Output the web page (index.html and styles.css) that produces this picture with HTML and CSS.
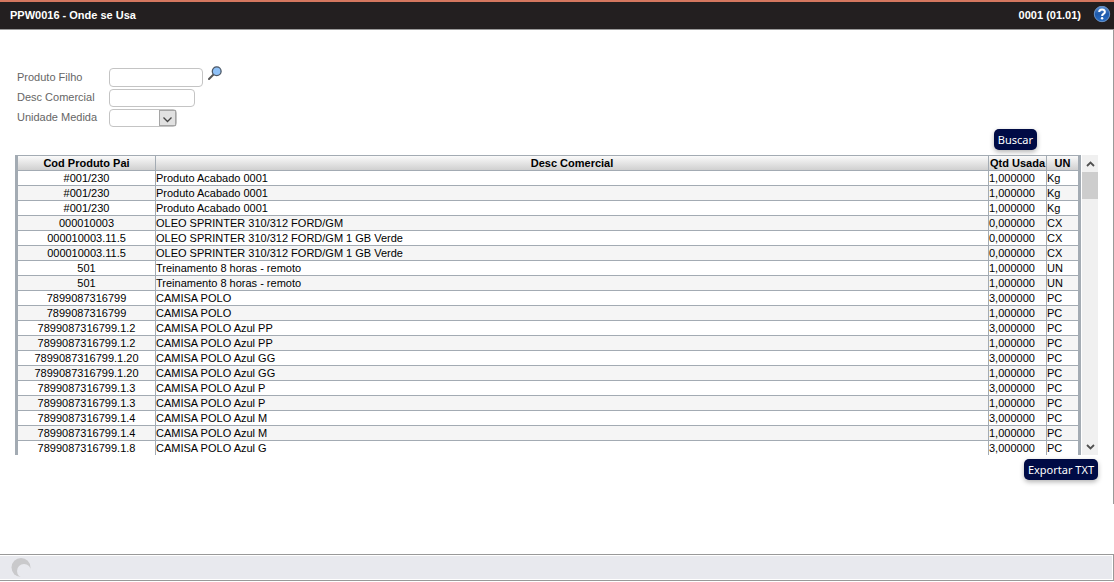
FILE: index.html
```html
<!DOCTYPE html>
<html lang="pt-BR">
<head>
  <meta charset="UTF-8">
  <meta name="viewport" content="width=device-width, initial-scale=1.0">
  <title>PPW0016 - Onde se Usa</title>
  <link rel="stylesheet" href="styles.css">
</head>
<body>
  <header class="topbar">
    <h1>PPW0016 - Onde se Usa</h1>
    <div class="topbar-right">
      <span>0001 (01.01)</span>
      <a href="#" class="help" aria-label="Ajuda">
        <svg width="18" height="18" viewBox="0 0 18 18">
          <defs>
            <linearGradient id="helpFill" x1="0" y1="0" x2="0" y2="1">
              <stop offset="0" stop-color="#5f92d2"/>
              <stop offset="0.5" stop-color="#1d58aa"/>
              <stop offset="1" stop-color="#2a6fc4"/>
            </linearGradient>
          </defs>
          <circle cx="9" cy="8" r="7.700" fill="url(#helpFill)" stroke="#6a93c8" stroke-width="1"/>
          <path d="M6.200 6.100C6.200 2.700 11.900 2.700 11.900 5.900C11.900 7.900 9.100 7.800 9.100 9.900" fill="none" stroke="#fff" stroke-width="2"/>
          <circle cx="9.100" cy="12.300" r="1.200" fill="#fff"/>
        </svg>
      </a>
    </div>
  </header>

  <main class="content">
    <form class="filters" id="filters">
      <div class="field">
        <label for="produto">Produto Filho</label>
        <input type="text" id="produto" class="input-produto">
        <button type="button" class="lookup" aria-label="Pesquisar produto">
          <svg width="14" height="14" viewBox="0 0 14 14">
            <path d="M1 13L6 8" stroke="#555" stroke-width="2" stroke-linecap="round"/>
            <circle cx="8.700" cy="5.200" r="4.400" fill="#8fc1f7" stroke="#4d5866" stroke-width="1.300"/>
          </svg>
        </button>
      </div>
      <div class="field">
        <label for="desc">Desc Comercial</label>
        <input type="text" id="desc" class="input-desc">
      </div>
      <div class="field">
        <label for="unidade">Unidade Medida</label>
        <div class="select-box">
          <select id="unidade"><option></option></select>
          <svg class="select-arrow" width="17" height="16" viewBox="0 0 17 16">
            <rect x="0.5" y="0.5" width="16" height="15" fill="#e1e1e1" stroke="#a5a5a5"/>
            <path d="M4.500 7.500L8.500 11.500L12.500 7.500" fill="none" stroke="#444" stroke-width="1.300"/>
          </svg>
        </div>
      </div>
    </form>

    <div class="search-actions">
      <button type="submit" form="filters" class="btn">Buscar</button>
    </div>

    <div class="grid-box">
      <div class="grid-scroll">
        <table class="grid">
          <colgroup>
            <col class="col-cod">
            <col>
            <col class="col-qtd">
            <col class="col-un">
          </colgroup>
          <thead>
            <tr><th>Cod Produto Pai</th><th>Desc Comercial</th><th>Qtd Usada</th><th>UN</th></tr>
          </thead>
          <tbody>
            <tr><td>#001/230</td><td>Produto Acabado 0001</td><td>1,000000</td><td>Kg</td></tr>
            <tr><td>#001/230</td><td>Produto Acabado 0001</td><td>1,000000</td><td>Kg</td></tr>
            <tr><td>#001/230</td><td>Produto Acabado 0001</td><td>1,000000</td><td>Kg</td></tr>
            <tr><td>000010003</td><td>OLEO SPRINTER 310/312 FORD/GM</td><td>0,000000</td><td>CX</td></tr>
            <tr><td>000010003.11.5</td><td>OLEO SPRINTER 310/312 FORD/GM 1 GB Verde</td><td>0,000000</td><td>CX</td></tr>
            <tr><td>000010003.11.5</td><td>OLEO SPRINTER 310/312 FORD/GM 1 GB Verde</td><td>0,000000</td><td>CX</td></tr>
            <tr><td>501</td><td>Treinamento 8 horas - remoto</td><td>1,000000</td><td>UN</td></tr>
            <tr><td>501</td><td>Treinamento 8 horas - remoto</td><td>1,000000</td><td>UN</td></tr>
            <tr><td>7899087316799</td><td>CAMISA POLO</td><td>3,000000</td><td>PC</td></tr>
            <tr><td>7899087316799</td><td>CAMISA POLO</td><td>1,000000</td><td>PC</td></tr>
            <tr><td>7899087316799.1.2</td><td>CAMISA POLO Azul PP</td><td>3,000000</td><td>PC</td></tr>
            <tr><td>7899087316799.1.2</td><td>CAMISA POLO Azul PP</td><td>1,000000</td><td>PC</td></tr>
            <tr><td>7899087316799.1.20</td><td>CAMISA POLO Azul GG</td><td>3,000000</td><td>PC</td></tr>
            <tr><td>7899087316799.1.20</td><td>CAMISA POLO Azul GG</td><td>1,000000</td><td>PC</td></tr>
            <tr><td>7899087316799.1.3</td><td>CAMISA POLO Azul P</td><td>3,000000</td><td>PC</td></tr>
            <tr><td>7899087316799.1.3</td><td>CAMISA POLO Azul P</td><td>1,000000</td><td>PC</td></tr>
            <tr><td>7899087316799.1.4</td><td>CAMISA POLO Azul M</td><td>3,000000</td><td>PC</td></tr>
            <tr><td>7899087316799.1.4</td><td>CAMISA POLO Azul M</td><td>1,000000</td><td>PC</td></tr>
            <tr><td>7899087316799.1.8</td><td>CAMISA POLO Azul G</td><td>3,000000</td><td>PC</td></tr>
          </tbody>
        </table>
      </div>
      <div class="scrollbar">
        <button type="button" aria-label="Rolar para cima">
          <svg width="9" height="6" viewBox="0 0 9 6"><path d="M1 5L4.500 1.500L8 5" fill="none" stroke="#505050" stroke-width="1.800"/></svg>
        </button>
        <div class="thumb"></div>
        <button type="button" class="down" aria-label="Rolar para baixo">
          <svg width="9" height="6" viewBox="0 0 9 6"><path d="M1 1L4.500 4.500L8 1" fill="none" stroke="#505050" stroke-width="1.800"/></svg>
        </button>
      </div>
    </div>

    <div class="export-actions">
      <button type="button" class="btn">Exportar TXT</button>
    </div>
  </main>

  <footer class="statusbar">
    <svg width="20" height="20" viewBox="0 0 20 20">
      <circle cx="10" cy="9.500" r="9.500" fill="#c9c9cb"/>
      <circle cx="13" cy="13" r="7" fill="#e8e9ee"/>
    </svg>
  </footer>
</body>
</html>
```
FILE: styles.css
```css
* { box-sizing: border-box; }
body {
  margin: 0;
  min-height: 100vh;
  display: flex;
  flex-direction: column;
  font-family: "Liberation Sans", Arial, sans-serif;
  font-size: 11px;
  background-color: #fff;
  color: #000;
}
button {
  border: none;
  padding: 0;
  background: none;
  cursor: pointer;
}
svg { display: block; }

/* Cabeçalho */
.topbar {
  height: 30px;
  display: flex;
  justify-content: space-between;
  align-items: center;
  padding: 0 3px 2px 10px;
  border-top: 2px solid #d4775f;
  border-bottom: 1px solid #999;
  background-color: #231f20;
  color: #fff;
  font-weight: bold;
}
.topbar h1 {
  margin: 0;
  font-size: 11px;
}
.topbar-right {
  display: flex;
  align-items: center;
  gap: 12px;
}

.content {
  flex: 1;
  margin-bottom: 50px;
  padding: 38px 15px 0 15px;
  border-right: 1px solid #999;
}

/* Filtros */
.filters {
  display: flex;
  flex-direction: column;
  gap: 2px;
  padding-left: 2px;
}
.field {
  display: flex;
  align-items: center;
}
.field label {
  width: 92px;
  padding-bottom: 2px;
  color: #666;
}
.field input,
.select-box select {
  height: 18px;
  border: 1px solid #c4c4c4;
  border-radius: 4px;
  background-color: #fff;
  font-family: inherit;
  font-size: 11px;
}
.field .input-produto {
  width: 94px;
  height: 19px;
}
.field .input-desc { width: 86px; }
.lookup {
  align-self: flex-start;
  height: 14px;
  margin: -2px 0 0 5px;
}
.select-box {
  position: relative;
  width: 68px;
  height: 18px;
}
.select-box select {
  appearance: none;
  display: block;
  width: 100%;
}
.select-arrow {
  position: absolute;
  top: 1px;
  right: 1px;
  pointer-events: none;
}

/* Botões */
.btn {
  height: 21px;
  padding: 0 4px;
  border-radius: 5px;
  background-color: #000b45;
  color: #fff;
  font-family: "Noto Sans", sans-serif;
  font-size: 11px;
  line-height: 21px;
  box-shadow: 0 2px 5px rgba(0, 0, 0, 0.3);
}
.search-actions {
  display: flex;
  justify-content: flex-end;
  padding: 2px 61px 5px 0;
}
.export-actions {
  display: flex;
  justify-content: flex-end;
  padding-top: 4px;
}

/* Tabela */
.grid-box {
  display: flex;
  gap: 1px;
  height: 300px;
}
.grid-scroll {
  flex: 1;
  overflow: hidden;
  border: solid #a3abb3;
  border-width: 0 3px;
}
.grid {
  width: 100%;
  table-layout: fixed;
  border-collapse: separate;
  border-spacing: 0;
}
.col-cod { width: 138px; }
.col-qtd { width: 58px; }
.col-un { width: 31px; }
.grid th,
.grid td {
  height: 15px;
  padding: 0;
  border-right: 1px solid #a3abb3;
  border-bottom: 1px solid #a3abb3;
  line-height: 14px;
  text-align: left;
  white-space: nowrap;
}
.grid th {
  height: 16px;
  border-top: 1px solid #a3abb3;
  background: linear-gradient(#fafafa, #d0d0d0);
  text-align: center;
}
.grid td:first-child { text-align: center; }
.grid th:last-child,
.grid td:last-child { border-right: none; }
.grid tbody tr:nth-child(even) { background-color: #f5f5f5; }

.scrollbar {
  width: 16px;
  display: flex;
  flex-direction: column;
  background-color: #f0f0f0;
}
.scrollbar button {
  height: 17px;
  display: flex;
  align-items: center;
  justify-content: center;
}
.scrollbar .thumb {
  height: 27px;
  background-color: #cdcdcd;
}
.scrollbar .down { margin-top: auto; }

/* Barra de status */
.statusbar {
  height: 27px;
  display: flex;
  align-items: center;
  margin-bottom: 1px;
  padding: 1px 1px 1px 0;
  border: solid #999;
  border-width: 1px 1px 1px 0;
  background-color: #e8e9ee;
  background-clip: content-box;
}
.statusbar svg { margin-left: 11px; }
```
